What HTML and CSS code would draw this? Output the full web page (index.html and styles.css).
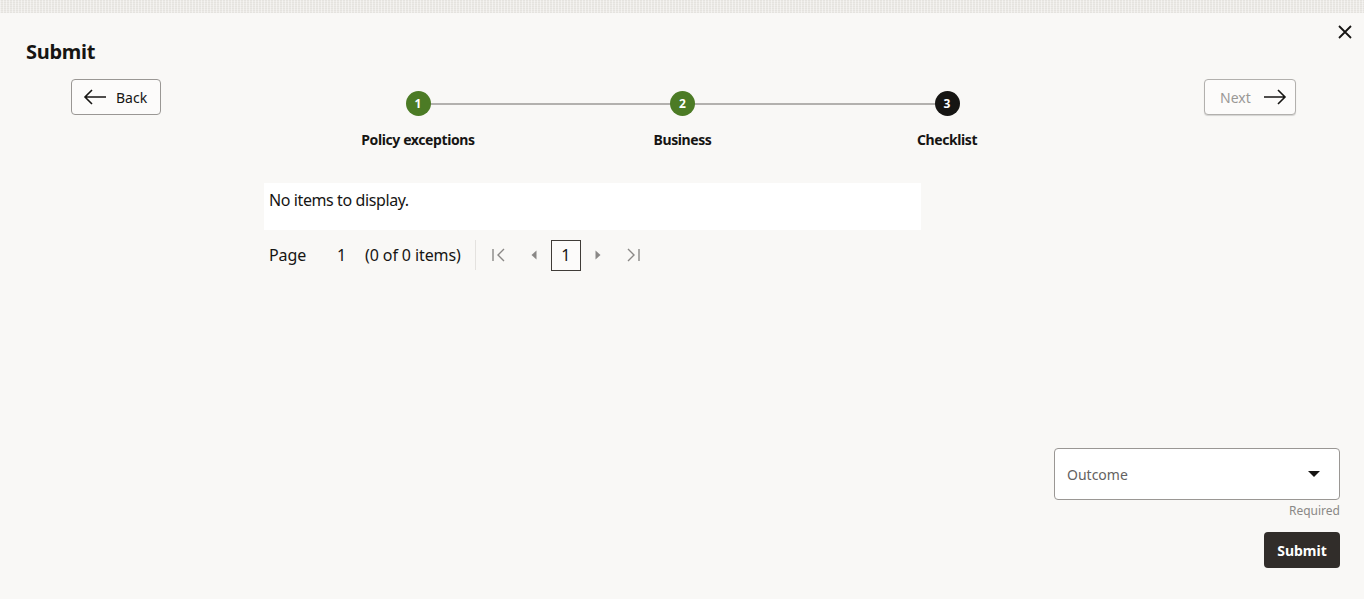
FILE: index.html
```html
<!DOCTYPE html>
<html lang="en">
<head>
<meta charset="utf-8">
<title>Submit</title>
<link rel="stylesheet" href="styles.css">
</head>
<body>
<div class="topbar"></div>
<div class="dialog">
  <div class="header">
    <h1 class="title">Submit</h1>
    <button class="close" aria-label="Close">
      <svg width="14" height="14" viewBox="0 0 14 14"><path d="M1 1L13 13M13 1L1 13" stroke="#161513" stroke-width="1.8" fill="none"/></svg>
    </button>
  </div>
  <div class="nav">
    <button class="btn back">
      <svg width="24" height="16" viewBox="0 0 24 16"><path d="M23 8H2M9 1L2 8l7 7" stroke="#161513" stroke-width="1.6" fill="none"/></svg>
      <span>Back</span>
    </button>
    <div class="stepper">
      <div class="step first done"><div class="circle">1</div><div class="label">Policy exceptions</div></div>
      <div class="step done"><div class="circle">2</div><div class="label">Business</div></div>
      <div class="step last current"><div class="circle">3</div><div class="label">Checklist</div></div>
    </div>
    <button class="btn next" disabled>
      <span>Next</span>
      <svg width="24" height="16" viewBox="0 0 24 16"><path d="M1 8h21M15 1l7 7-7 7" stroke="#161513" stroke-width="1.6" fill="none"/></svg>
    </button>
  </div>
  <div class="content">
    <div class="table">No items to display.</div>
    <div class="pager">
      <span class="pg-label">Page</span>
      <span class="pg-num">1</span>
      <span class="pg-count">(0 of 0 items)</span>
      <span class="pg-sep"></span>
      <span class="pg-icon pg-first">
        <svg width="16" height="16" viewBox="0 0 16 16"><path d="M2 2v12M13 2L7 8l6 6" stroke="#8a8886" stroke-width="1.4" fill="none"/></svg>
      </span>
      <span class="pg-icon pg-prev">
        <svg width="10" height="12" viewBox="0 0 10 12"><path d="M7.5 1.5v9L2.5 6z" fill="#8a8886"/></svg>
      </span>
      <span class="pg-box">1</span>
      <span class="pg-icon pg-next">
        <svg width="10" height="12" viewBox="0 0 10 12"><path d="M2.5 1.5v9L7.5 6z" fill="#8a8886"/></svg>
      </span>
      <span class="pg-icon pg-last">
        <svg width="16" height="16" viewBox="0 0 16 16"><path d="M14 2v12M3 2l6 6-6 6" stroke="#8a8886" stroke-width="1.4" fill="none"/></svg>
      </span>
    </div>
  </div>
  <div class="form">
    <div class="select">
      <span>Outcome</span>
      <svg width="12" height="8" viewBox="0 0 12 8"><path d="M0 1h12L6 7z" fill="#161513"/></svg>
    </div>
    <div class="required">Required</div>
    <button class="submit">Submit</button>
  </div>
</div>
</body>
</html>
```
FILE: styles.css
```css
* { box-sizing: border-box; }
html, body { margin: 0; padding: 0; }
body {
  background: #f9f8f6;
  font-family: "Noto Sans", "Open Sans", sans-serif;
  color: #161513;
  width: 1364px;
  height: 599px;
  overflow: hidden;
}
.topbar {
  height: 13px;
  background-color: #eceae6;
  background-image: repeating-linear-gradient(90deg, rgba(255,255,255,0.45) 0 1px, transparent 1px 3px),
                    repeating-linear-gradient(0deg, rgba(0,0,0,0.03) 0 1px, transparent 1px 2px);
}
.dialog {
  padding: 0 12px 0 26px;
}
.header {
  display: flex;
  justify-content: space-between;
  align-items: flex-start;
  height: 66px;
}
.title {
  margin: 26px 0 0;
  font-size: 20px;
  line-height: 26px;
  font-weight: 700;
  letter-spacing: -0.3px;
}
.close {
  margin: 12px 0 0;
  padding: 0;
  border: 0;
  background: none;
  width: 14px;
  height: 14px;
  display: flex;
}
.nav {
  display: flex;
  align-items: flex-start;
  padding: 0 56px 0 45px;
  height: 104px;
}
.btn {
  display: flex;
  align-items: center;
  height: 36px;
  border: 1px solid #9a9794;
  border-radius: 4px;
  background: #fcfbfa;
  font-family: inherit;
  font-size: 14px;
  color: #161513;
}
.back {
  width: 90px;
  padding: 0 0 0 11px;
  gap: 9px;
}
.next {
  width: 92px;
  padding: 0 0 0 15px;
  gap: 12px;
  color: #9a9896;
  border-color: #b2b0ad;
  box-shadow: 0 1px 1px rgba(0,0,0,0.15);
}
.stepper {
  flex: 1;
  display: flex;
  justify-content: center;
}
.step {
  width: 264.5px;
  position: relative;
  display: flex;
  flex-direction: column;
  align-items: center;
  padding-top: 12px;
}
.step::before, .step::after {
  content: "";
  position: absolute;
  top: 24px;
  height: 2px;
  background: #b3b1ae;
  width: 50%;
}
.step::before { left: 0; }
.step::after { right: 0; }
.step.first::before { display: none; }
.step.last::after { display: none; }
.circle {
  position: relative;
  z-index: 1;
  width: 25px;
  height: 25px;
  border-radius: 50%;
  background: #4c7b25;
  color: #fff;
  font-size: 12px;
  font-weight: 700;
  display: flex;
  align-items: center;
  justify-content: center;
  line-height: 1;
}
.step.current .circle { background: #161513; }
.label {
  margin-top: 14px;
  font-size: 14px;
  font-weight: 700;
  line-height: 20px;
  white-space: nowrap;
  letter-spacing: -0.4px;
}
.content {
  margin-left: 238px;
  width: 657px;
}
.table {
  background: #fff;
  height: 47px;
  padding: 6px 0 0 5px;
  font-size: 16px;
  line-height: 22px;
  letter-spacing: -0.4px;
}
.pager {
  display: flex;
  align-items: center;
  height: 50px;
  font-size: 16px;
  padding-left: 5px;
  letter-spacing: -0.1px;
}
.pg-label { width: 63px; }
.pg-num { width: 33px; padding-left: 5px; }
.pg-sep {
  width: 1px;
  height: 30px;
  background: #e4e2df;
  margin: 0 15px 0 14px;
}
.pg-icon { display: flex; align-items: center; justify-content: center; }
.pg-first { margin-right: 22px; }
.pg-prev { margin-right: 12px; }
.pg-next { margin-left: 12px; margin-right: 22px; }
.pg-box {
  width: 30px;
  height: 31px;
  border: 1px solid #403c38;
  display: flex;
  align-items: center;
  justify-content: center;
  background: #fcfbfa;
}
.form {
  margin-left: auto;
  margin-right: 12px;
  margin-top: 168px;
  width: 286px;
  display: flex;
  flex-direction: column;
  align-items: flex-end;
}
.select {
  width: 286px;
  height: 52px;
  border: 1px solid #9a9794;
  border-radius: 4px;
  background: #fff;
  display: flex;
  align-items: center;
  justify-content: space-between;
  padding: 0 19px 0 12px;
  font-size: 14px;
  color: #646261;
}
.required {
  font-size: 12px;
  color: #8a8886;
  line-height: 16px;
  margin-top: 3px;
}
.submit {
  margin-top: 13px;
  width: 76px;
  height: 36px;
  border: 0;
  border-radius: 4px;
  background: #312d2a;
  color: #fff;
  font-family: inherit;
  font-weight: 700;
  font-size: 14px;
}
```
